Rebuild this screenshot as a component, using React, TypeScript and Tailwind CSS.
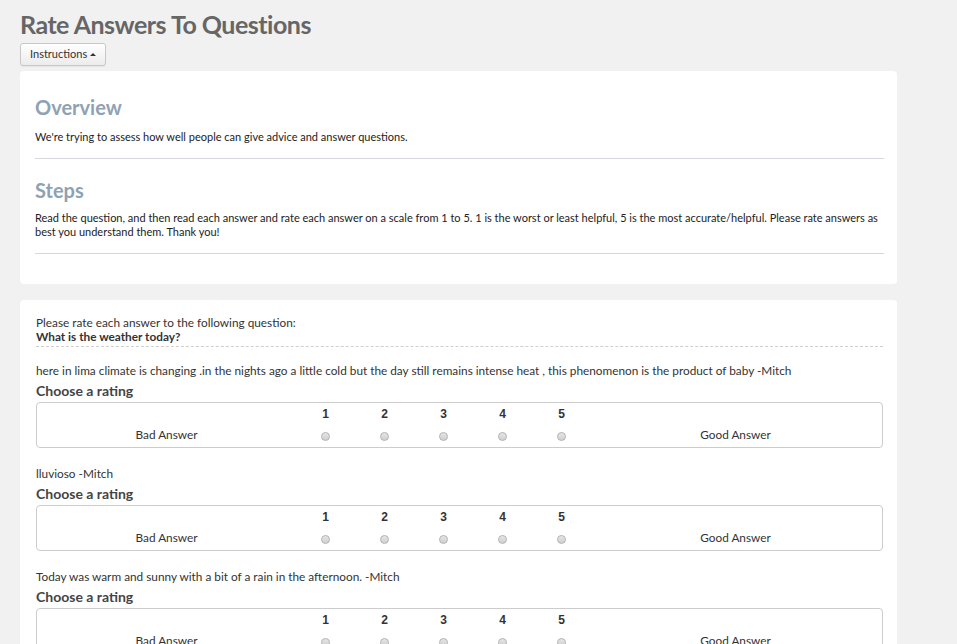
import React from "react";

const answers = [
  "here in lima climate is changing .in the nights ago a little cold but the day still remains intense heat , this phenomenon is the product of baby -Mitch",
  "lluvioso -Mitch",
  "Today was warm and sunny with a bit of a rain in the afternoon. -Mitch",
];

function Radio() {
  return (
    <span className="inline-block h-[9px] w-[9px] rounded-full border border-[#b5b5b5] bg-gradient-to-b from-[#e6e6e6] to-[#cfcfcf]" />
  );
}

function RatingBlock({ text }: { text: string }) {
  return (
    <div className="mb-[18px]">
      <p className="text-[11.8px] leading-[16px] text-[#333]">{text}</p>
      <h4 className="mt-[3px] text-[14px] font-bold leading-[18px] text-[#444]">Choose a rating</h4>
      <div className="mt-[2px] rounded-[4px] border border-[#cccccc]">
        <table className="w-full border-collapse">
          <tbody>
            <tr className="h-[20px]">
              <td className="w-[259px]" />
              {[1, 2, 3, 4, 5].map((n) => (
                <td
                  key={n}
                  className="w-[59px] pt-[1px] text-center text-[12px] font-bold leading-[16px] text-[#333] [font-family:'Liberation_Sans',Arial,sans-serif]"
                >
                  {n}
                </td>
              ))}
              <td />
            </tr>
            <tr className="h-[24px]">
              <td className="text-center text-[11.8px] leading-[16px] text-[#333]">Bad Answer</td>
              {[1, 2, 3, 4, 5].map((n) => (
                <td key={n} className="text-center align-middle">
                  <Radio />
                </td>
              ))}
              <td className="pr-[2px] text-center text-[11.8px] leading-[16px] text-[#333]">Good Answer</td>
            </tr>
          </tbody>
        </table>
      </div>
    </div>
  );
}

export default function App() {
  return (
    <div className="min-h-screen bg-[#f1f1f1] px-[20px] pt-[8px] pb-10 [font-family:Lato,'Open_Sans',sans-serif]">
      <div className="w-[877px]">
        <h1 className="text-[25px] font-bold leading-[32px] tracking-[-0.5px] text-[#666666]">
          Rate Answers To Questions
        </h1>
        <button className="mt-[3px] flex h-[23px] items-center gap-[3px] rounded-[3px] border border-[#c8c8c8] bg-gradient-to-b from-white to-[#ececec] px-[9px] text-[11px] text-[#333] shadow-[0_1px_1px_rgba(0,0,0,0.05)]">
          Instructions
          <svg width="6" height="4" viewBox="0 0 6 4" className="mb-[1px]">
            <path d="M0 4 L3 1 L6 4 Z" fill="#333" />
          </svg>
        </button>

        <div className="mt-[5px] rounded-[4px] bg-white px-[15px] pt-[23px] pb-[30px]">
          <h2 className="text-[20px] font-bold leading-[26px] text-[#8fa2b4]">Overview</h2>
          <p className="mt-[10px] text-[11px] leading-[14px] text-[#222]">
            We're trying to assess how well people can give advice and answer questions.
          </p>
          <hr className="mt-[14px] mr-[-2px] border-t border-[#d6d8de]" />
          <h2 className="mt-[18px] text-[20px] font-bold leading-[26px] text-[#8fa2b4]">Steps</h2>
          <p className="mt-[8px] text-[11px] leading-[14px] text-[#222]">
            Read the question, and then read each answer and rate each answer on a scale from 1 to 5. 1 is the worst or least helpful, 5 is the most accurate/helpful. Please rate answers as best you understand them. Thank you!
          </p>
          <hr className="mt-[14px] mr-[-2px] border-t border-[#d6d8de]" />
        </div>

        <div className="mt-[16px] rounded-[4px] bg-white pl-[16px] pr-[14px] pt-[16px] pb-4">
          <p className="text-[11.8px] leading-[14px] text-[#333]">Please rate each answer to the following question:</p>
          <p className="border-b border-dashed border-[#cfcfcf] pb-[2px] text-[11.8px] font-bold leading-[14px] text-[#333]">
            What is the weather today?
          </p>
          <div className="mt-[16px]">
            {answers.map((a, i) => (
              <RatingBlock key={i} text={a} />
            ))}
          </div>
        </div>
      </div>
    </div>
  );
}
